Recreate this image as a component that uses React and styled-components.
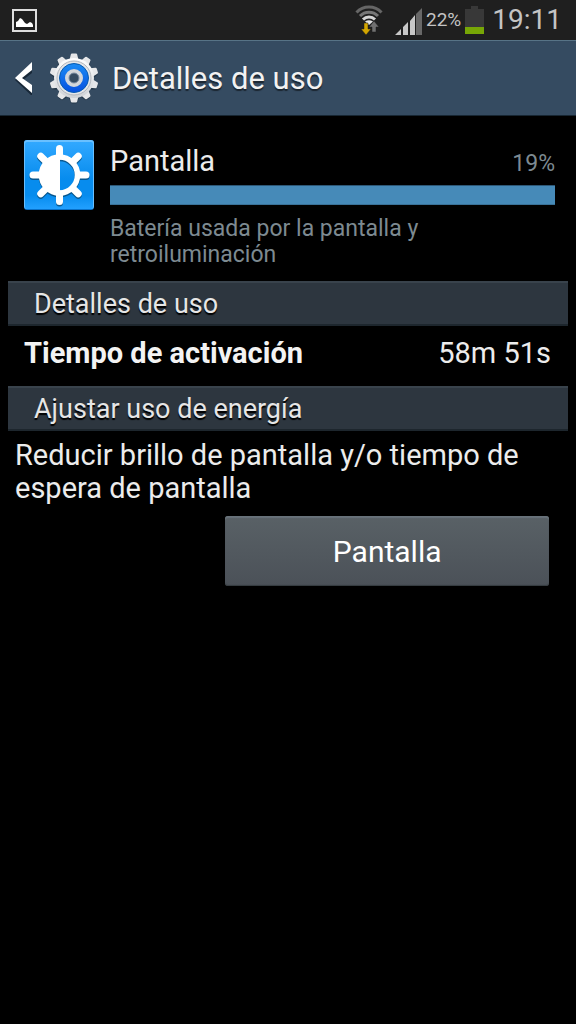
import React from "react";
import styled, { createGlobalStyle } from "styled-components";

const GlobalStyle = createGlobalStyle`
  * { box-sizing: border-box; }
  body {
    margin: 0;
    background: #000;
    color: #ececec;
    font-family: Roboto, "Liberation Sans", sans-serif;
  }
  h1, h2, p, dl, dt, dd { margin: 0; font-weight: 400; }
`;

const Screen = styled.div`
  min-height: 100vh;
  background: #000;
`;

const StatusBar = styled.div`
  display: flex;
  align-items: center;
  justify-content: space-between;
  height: 40px;
  padding: 0 14px 0 12px;
  background: #1f1f1f;
  color: #c4c4c4;
`;

const StatusGroup = styled.div`
  display: flex;
  align-items: center;
`;

const Radios = styled.div`
  display: flex;
  gap: 12px;
`;

const Percent = styled.span`
  margin: 0 4px;
  font-size: 19px;
  line-height: 40px;
`;

const Clock = styled.time`
  margin-left: 8px;
  font-size: 28px;
  line-height: 40px;
`;

const Header = styled.header`
  display: flex;
  align-items: center;
  height: 76px;
  padding: 0 14px;
  background: #354b61;
  border-top: 1px solid #577386;
  border-bottom: 1px solid #172632;
`;

const BackButton = styled.button`
  display: flex;
  align-items: center;
  padding: 0;
  border: 0;
  background: none;
  cursor: pointer;
`;

const Title = styled.h1`
  margin-left: 12px;
  padding-top: 2px;
  font-size: 31px;
  line-height: 40px;
  color: #f2f2f2;
  text-shadow: 0 2px 1px rgba(0, 0, 0, 0.5);
`;

const Content = styled.main`
  padding: 0 8px;
`;

const Summary = styled.section`
  display: flex;
  gap: 16px;
  padding: 23px 13px 13px 16px;
`;

const SummaryBody = styled.div`
  flex: 1;
  min-width: 0;
`;

const SummaryTop = styled.div`
  display: flex;
  align-items: baseline;
  justify-content: space-between;
  height: 46px;
  line-height: 44px;
`;

const ItemName = styled.span`
  font-size: 29px;
`;

const ItemShare = styled.span`
  font-size: 23px;
  color: #7d8a91;
`;

const Bar = styled.div`
  height: 20px;
  background: #468ab8;
  border-top: 1px solid #2d5877;
  border-bottom: 1px solid #3a7298;
`;

const Description = styled.p`
  margin-top: 11px;
  max-width: 340px;
  font-size: 23px;
  line-height: 26px;
  color: #7d8a91;
`;

const SectionHeading = styled.h2`
  height: 45px;
  padding: 0 26px;
  background: #2d363f;
  border-top: 2px solid #39434c;
  border-bottom: 2px solid #1d262d;
  font-size: 27px;
  line-height: 43px;
  color: #e6e6e6;
  text-shadow: 0 2px 1px #000;
`;

const Details = styled.dl`
  display: flex;
  justify-content: space-between;
  height: 60px;
  padding: 0 17px 0 16px;
  font-size: 29px;
  line-height: 54px;
`;

const Term = styled.dt`
  && { font-weight: 700; }
  color: #f3f3f3;
`;

const Advice = styled.p`
  padding: 8px 7px 0;
  max-width: 540px;
  font-size: 29px;
  line-height: 33px;
`;

const Actions = styled.div`
  display: flex;
  justify-content: flex-end;
  padding: 11px 19px 0;
`;

const ActionButton = styled.button`
  width: 62%;
  height: 70px;
  padding: 2px 0 0;
  border: 0;
  border-radius: 3px;
  background: linear-gradient(#596166, #4b5158);
  box-shadow: inset 0 2px 1px #68727a, inset 0 -1px 1px #353b40;
  color: #fff;
  font-family: inherit;
  font-size: 30px;
  line-height: 40px;
  cursor: pointer;
`;

const PictureIcon = () => (
  <svg width="25" height="23" viewBox="0 0 25 23" aria-hidden="true">
    <rect x="1" y="1" width="23" height="21" fill="#1f1f1f" stroke="#dedede" strokeWidth="2" />
    <path d="M4 18v-5l2-1 2-3 2 1 3 4 2 1 3-2 2 1 1 2v2z" fill="#fff" />
  </svg>
);

const WifiIcon = () => (
  <svg width="28" height="30" viewBox="0 0 28 30" aria-hidden="true">
    <g fill="none" strokeWidth="3">
      <path d="M1.5 7.5A17 17 0 0 1 26.5 7.5" stroke="#666" />
      <path d="M5 11A12.5 12.5 0 0 1 23 11" stroke="#777" />
      <path d="M8 14.5A8.5 8.5 0 0 1 20 14.5" stroke="#d4d4d4" />
    </g>
    <path d="M10 16.5Q14 14 18 16.5L14 20z" fill="#e5e5e5" />
    <path d="M9 18h4v6h3l-5 6-5-6h3z" fill="#d3a600" stroke="#1f1f1f" strokeWidth="0.5" />
    <path d="M17 27v-5h-3l5-6 5 6h-3v5z" fill="#707070" stroke="#1f1f1f" strokeWidth="0.5" />
  </svg>
);

const SignalIcon = () => (
  <svg width="27" height="30" viewBox="0 -3 27 30" aria-hidden="true">
    <path d="M0 27l6-6v6zM8 27v-8l5-5v13zM15 27V13l5-6v20z" fill="#c8c8c8" />
    <path d="M21 27V6l6-6v27z" fill="#686868" />
  </svg>
);

const BatteryIcon = () => (
  <svg width="19" height="28" viewBox="0 0 19 28" aria-hidden="true">
    <path d="M6 0h7v3h6v18H0V3h6z" fill="#383838" />
    <path d="M0 21h19v7H0z" fill="#77a606" />
  </svg>
);

const BackIcon = () => (
  <svg width="20" height="34" viewBox="0 0 20 34" aria-hidden="true">
    <path d="M18 4v8l-9 7 9 8v8L1 19z" fill="#182838" />
    <path d="M18 1v8l-10 8 10 7v8L1 17z" fill="#fff" />
  </svg>
);

const TEETH = Array.from({ length: 10 }, (_, i) => i * 36);

const Gear = styled.svg`
  margin-left: 14px;
`;

const GearIcon = () => (
  <Gear width="52" height="52" viewBox="-26 -26 52 52" aria-hidden="true">
    <defs>
      <linearGradient id="metal" x1="0" y1="0" x2="0" y2="1">
        <stop offset="0" stopColor="#fff" />
        <stop offset="1" stopColor="#cfd2d6" />
      </linearGradient>
      <linearGradient id="disc" x1="0" y1="0" x2="0" y2="1">
        <stop offset="0" stopColor="#1c8cf5" />
        <stop offset="1" stopColor="#0650e0" />
      </linearGradient>
    </defs>
    <g fill="#1c2c3b" opacity="0.6">
      {TEETH.map((a) => (
        <path key={a} d="M-5-19L-3-24Q0-25 3-24L5-19z" transform={`translate(0 1) rotate(${a})`} />
      ))}
    </g>
    {TEETH.map((a) => (
      <path key={a} d="M-4.5-18L-3.2-23.5Q-3-24.5-2-24.5H2Q3-24.5 3.2-23.5L4.5-18z" fill="#e6e7e9" transform={`rotate(${a})`} />
    ))}
    <circle r="20" fill="url(#metal)" />
    <circle r="17" fill="#e4e6e9" stroke="#b2b6bc" />
    <circle r="14.5" fill="url(#disc)" stroke="#075bb0" />
    <circle r="7" fill="none" stroke="#d3d6da" strokeWidth="4" />
    <circle r="5" fill="#354b61" stroke="#8390a0" />
  </Gear>
);

const RAYS = Array.from({ length: 8 }, (_, i) => i * 45);

const Sun = ({ color }) => (
  <g fill={color} stroke={color}>
    {RAYS.map((a) => (
      <path key={a} d="M0-19V-26.5" strokeWidth="7" strokeLinecap="round" transform={`rotate(${a})`} />
    ))}
    <circle r="18" fill="none" strokeWidth="5.5" />
    <path d="M0-17A17 17 0 0 0 0 17z" />
  </g>
);

const AppTile = styled.svg`
  flex: none;
  margin-top: 1px;
`;

const DisplayIcon = () => (
  <AppTile width="70" height="70" viewBox="0 0 70 70" aria-hidden="true">
    <defs>
      <linearGradient id="tile" x1="0" y1="0" x2="0" y2="1">
        <stop offset="0" stopColor="#31a8ff" />
        <stop offset="0.55" stopColor="#078cee" />
        <stop offset="0.8" stopColor="#078cee" />
        <stop offset="1" stopColor="#22a0ff" />
      </linearGradient>
    </defs>
    <rect width="70" height="70" rx="3" fill="#0870c8" />
    <rect width="70" height="69" rx="3" fill="#69c0ff" />
    <rect x="1" y="2" width="68" height="67" rx="2" fill="url(#tile)" />
    <g transform="translate(35.5 36.5)" opacity="0.75"><Sun color="#06456f" /></g>
    <g transform="translate(35.5 35)"><Sun color="#fff" /></g>
  </AppTile>
);

export default function App() {
  return (
    <Screen>
      <GlobalStyle />
      <StatusBar>
        <PictureIcon />
        <StatusGroup>
          <Radios>
            <WifiIcon />
            <SignalIcon />
          </Radios>
          <Percent>22%</Percent>
          <BatteryIcon />
          <Clock>19:11</Clock>
        </StatusGroup>
      </StatusBar>
      <Header>
        <BackButton type="button" aria-label="Atrás">
          <BackIcon />
        </BackButton>
        <GearIcon />
        <Title>Detalles de uso</Title>
      </Header>
      <Content>
        <Summary>
          <DisplayIcon />
          <SummaryBody>
            <SummaryTop>
              <ItemName>Pantalla</ItemName>
              <ItemShare>19%</ItemShare>
            </SummaryTop>
            <Bar />
            <Description>Batería usada por la pantalla y retroiluminación</Description>
          </SummaryBody>
        </Summary>
        <SectionHeading>Detalles de uso</SectionHeading>
        <Details>
          <Term>Tiempo de activación</Term>
          <dd>58m 51s</dd>
        </Details>
        <SectionHeading>Ajustar uso de energía</SectionHeading>
        <Advice>Reducir brillo de pantalla y/o tiempo de espera de pantalla</Advice>
        <Actions>
          <ActionButton type="button">Pantalla</ActionButton>
        </Actions>
      </Content>
    </Screen>
  );
}
